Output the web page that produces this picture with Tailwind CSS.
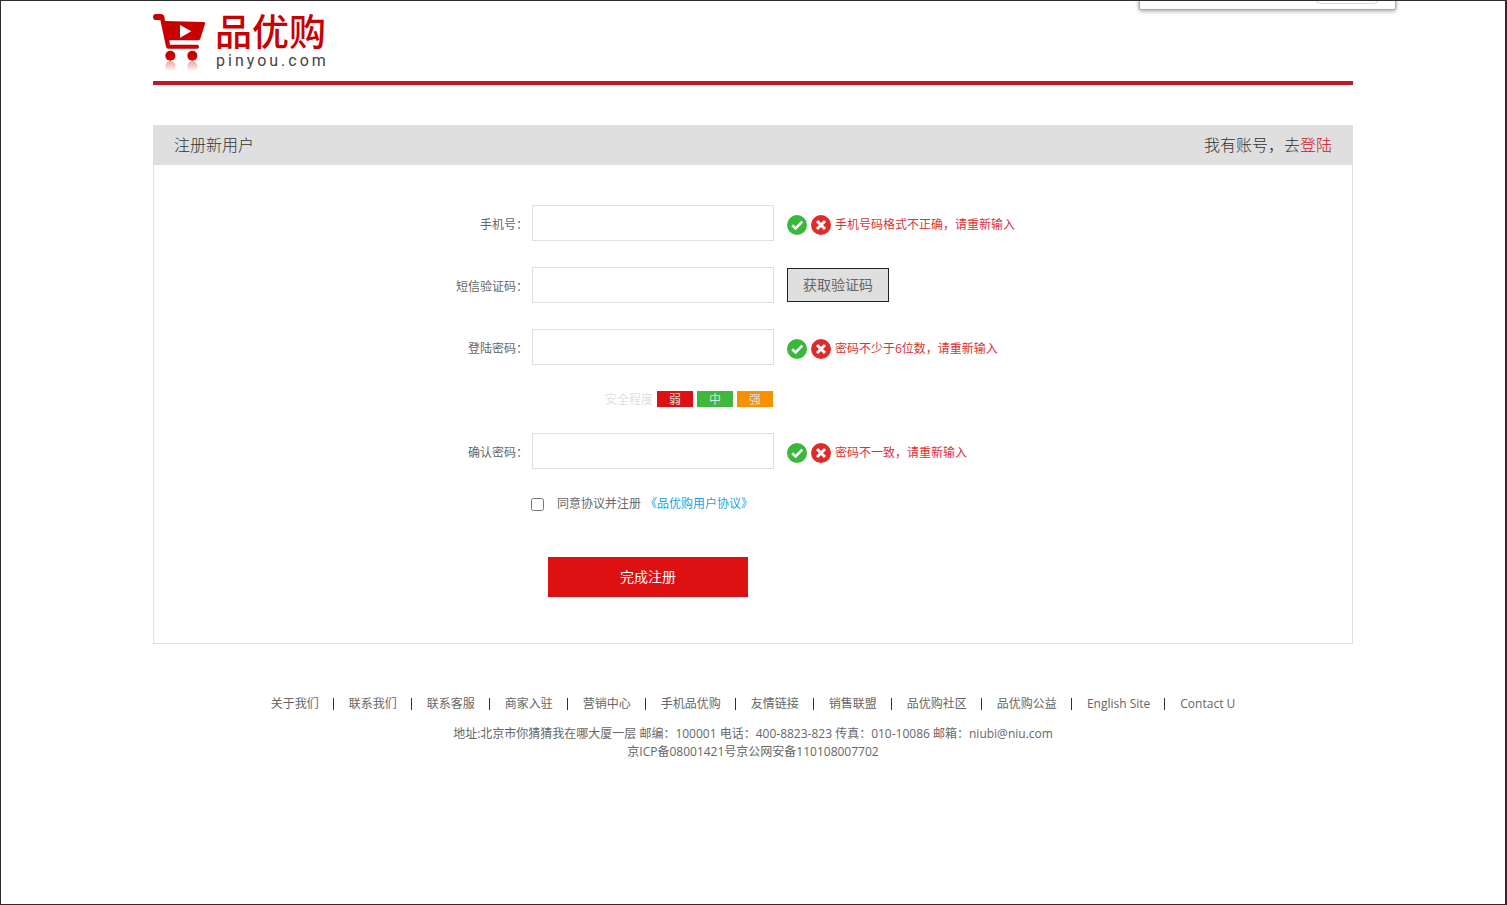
<!DOCTYPE html>
<html lang="zh-CN">
<head>
<meta charset="utf-8">
<title>品优购 - 注册新用户</title>
<script src="https://cdn.jsdelivr.net/npm/@tailwindcss/browser@4"></script>
</head>
<body class="relative min-h-screen border-t border-b border-l border-r-2 border-[#2f2c30] bg-white font-['Open_Sans','Noto_Sans_CJK_SC',sans-serif] text-xs text-[#666]">
<svg class="hidden">
  <defs>
    <symbol id="ok" viewBox="0 0 20 20"><circle cx="10" cy="10" r="10" fill="#39b939"/><path d="M5.2 10.3 8.6 13.5 15.2 6.6" fill="none" stroke="#fff" stroke-width="2.6"/></symbol>
    <symbol id="no" viewBox="0 0 20 20"><circle cx="10" cy="10" r="10" fill="#e12b2b"/><path d="M6 6 14 14M14 6 6 14" fill="none" stroke="#fff" stroke-width="3"/></symbol>
  </defs>
</svg>
<div class="absolute inset-y-0 -left-px flex w-px flex-col justify-end">
  <div class="h-10 bg-[#b8794f]"></div>
  <div class="h-16 bg-[#2f2c30]"></div>
  <div class="h-4 bg-[#34406c]"></div>
  <div class="h-4 bg-[#909090]"></div>
  <div class="h-36 bg-[#2f2c30]"></div>
  <div class="h-6 bg-[#37a060]"></div>
</div>
<div class="absolute -top-1 right-[109px] flex h-[13px] w-[257px] justify-end rounded-b-[2px] border border-[#aaa] bg-white pr-4 shadow-[0_1px_4px_rgba(0,0,0,0.4)]">
  <div class="h-[6px] w-16 rounded-b-md border border-t-0 border-[#d8d8d8]"></div>
</div>

<div class="mx-auto w-full max-w-[1200px]">
  <header class="h-21 border-b-4 border-[#c81623] pt-3">
    <a href="#" class="flex items-start gap-[9px]" aria-label="品优购 pinyou.com">
      <svg class="h-[60px] w-[53px]" viewBox="0 0 159 180">
        <defs>
          <linearGradient id="fade" x1="0" y1="0" x2="0" y2="1"><stop offset="0" stop-color="#c80000" stop-opacity=".35"/><stop offset="1" stop-color="#c80000" stop-opacity="0"/></linearGradient>
        </defs>
        <path d="M6 3H23Q32 3 34 11L36 24 152 27Q158 27 156 33L142 77Q140 82 134 82H49L51 95H133Q138 95 138 101T132 107H46Q40 107 39 101L22 21H6Q0 20 0 12T6 3Z" fill="#c80000"/>
        <path d="M81 36V74L115 55Z" fill="#fff"/>
        <circle cx="52" cy="128" r="15" fill="#c80000"/><circle cx="118" cy="128" r="15" fill="#c80000"/>
        <path d="M37 159a15 15 0 0 1 30 0v6a15 12 0 0 1-30 0ZM103 159a15 15 0 0 1 30 0v6a15 12 0 0 1-30 0Z" fill="url(#fade)"/>
      </svg>
      <span class="flex flex-col gap-1">
        <span class="font-['Noto_Sans_CJK_SC',sans-serif] text-[37px] leading-[34px] font-medium text-[#c80000]">品优购</span>
        <span class="pl-px font-['Roboto',sans-serif] text-base leading-5 tracking-[3px] text-[#444]">pinyou.com</span>
      </span>
    </a>
  </header>

  <main class="mt-10 border border-[#dfdfdf]">
    <div class="flex h-[39px] items-center justify-between bg-[#dfdfdf] px-5 pb-0.5 text-base font-light text-[#333]">
      <h1>注册新用户</h1>
      <p>我有账号，去<a href="#" class="text-[#c81623]">登陆</a></p>
    </div>
    <form class="flex flex-col gap-[26px] pt-10 pb-[46px]">
      <div class="flex h-9 items-center">
        <label for="phone" class="mr-1 w-[374px] pt-1 text-right">手机号：</label>
        <input id="phone" type="text" class="h-9 w-[242px] border border-[#dfdfdf] px-2">
        <div class="ml-[13px] flex items-center gap-1 pt-1 text-[#df3033]">
          <svg class="size-5"><use href="#ok"/></svg><svg class="size-5"><use href="#no"/></svg><span>手机号码格式不正确，请重新输入</span>
        </div>
      </div>
      <div class="flex h-9 items-center">
        <label for="code" class="mr-1 w-[374px] pt-1 text-right">短信验证码：</label>
        <input id="code" type="text" class="h-9 w-[242px] border border-[#dfdfdf] px-2">
        <button type="button" class="ml-[13px] h-[34px] w-[102px] border border-[#222] bg-[#dfdfdf] text-sm">获取验证码</button>
      </div>
      <div class="flex h-9 items-center">
        <label for="pwd" class="mr-1 w-[374px] pt-1 text-right">登陆密码：</label>
        <input id="pwd" type="password" class="h-9 w-[242px] border border-[#dfdfdf] px-2">
        <div class="ml-[13px] flex items-center gap-1 pt-1 text-[#df3033]">
          <svg class="size-5"><use href="#ok"/></svg><svg class="size-5"><use href="#no"/></svg><span>密码不少于6位数，请重新输入</span>
        </div>
      </div>
      <div class="flex h-4 w-[619px] justify-end gap-1 text-center leading-[18px] text-[#dfdfdf]">
        <span>安全程度</span>
        <em class="h-4 w-9 bg-[#dd1111] not-italic">弱</em>
        <em class="h-4 w-9 bg-[#40b83f] not-italic">中</em>
        <em class="h-4 w-9 bg-[#f79100] not-italic">强</em>
      </div>
      <div class="flex h-9 items-center">
        <label for="pwd2" class="mr-1 w-[374px] pt-1 text-right">确认密码：</label>
        <input id="pwd2" type="password" class="h-9 w-[242px] border border-[#dfdfdf] px-2">
        <div class="ml-[13px] flex items-center gap-1 pt-1 text-[#df3033]">
          <svg class="size-5"><use href="#ok"/></svg><svg class="size-5"><use href="#no"/></svg><span>密码不一致，请重新输入</span>
        </div>
      </div>
      <div class="flex h-[18px] items-center pl-[377px]">
        <input id="agree" type="checkbox" class="size-[13px]">
        <label for="agree" class="ml-[13px]">同意协议并注册</label>
        <a href="#" class="ml-1 text-[#1ba1e6]">《品优购用户协议》</a>
      </div>
      <button type="submit" class="mt-[18px] ml-[394px] h-10 w-[200px] bg-[#dd1111] text-sm text-white">完成注册</button>
    </form>
  </main>

  <footer class="mt-[51px] text-center">
    <nav class="flex h-[18px] items-center justify-center gap-[14px] whitespace-nowrap">
      <a href="#">关于我们</a><i class="mr-px h-3 w-px bg-[#333]"></i>
      <a href="#">联系我们</a><i class="mr-px h-3 w-px bg-[#333]"></i>
      <a href="#">联系客服</a><i class="mr-px h-3 w-px bg-[#333]"></i>
      <a href="#">商家入驻</a><i class="mr-px h-3 w-px bg-[#333]"></i>
      <a href="#">营销中心</a><i class="mr-px h-3 w-px bg-[#333]"></i>
      <a href="#">手机品优购</a><i class="mr-px h-3 w-px bg-[#333]"></i>
      <a href="#">友情链接</a><i class="mr-px h-3 w-px bg-[#333]"></i>
      <a href="#">销售联盟</a><i class="mr-px h-3 w-px bg-[#333]"></i>
      <a href="#">品优购社区</a><i class="mr-px h-3 w-px bg-[#333]"></i>
      <a href="#">品优购公益</a><i class="mr-px h-3 w-px bg-[#333]"></i>
      <a href="#">English Site</a><i class="mr-px h-3 w-px bg-[#333]"></i>
      <a href="#">Contact U</a>
    </nav>
    <p class="mt-3 leading-[18px]">地址:北京市你猜猜我在哪大厦一层 邮编：100001 电话：400-8823-823 传真：010-10086 邮箱：niubi@niu.com<br>京ICP备08001421号京公网安备110108007702</p>
  </footer>
</div>
</body>
</html>
